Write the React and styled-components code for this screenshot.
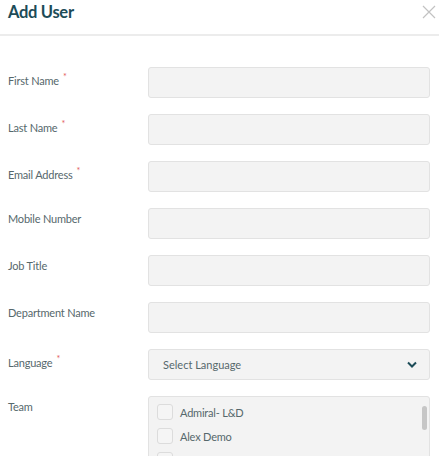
import React from 'react';
import styled, { createGlobalStyle } from 'styled-components';

const GlobalStyle = createGlobalStyle`
  html, body {
    margin: 0;
    padding: 0;
    background: #fff;
    overflow: hidden;
    font-family: Lato, "Open Sans", sans-serif;
  }
`;

const Modal = styled.div`
  width: 439px;
  background: #fff;
`;

const Header = styled.div`
  display: flex;
  align-items: center;
  justify-content: space-between;
  height: 34px;
  padding: 0 3px 0 8px;
  border-bottom: 2px solid #ececec;
`;

const Title = styled.h2`
  margin: 0;
  margin-top: -11px;
  font-size: 16.5px;
  font-weight: 700;
  color: #1d4c58;
  letter-spacing: -0.3px;
`;

const Close = styled.button`
  border: none;
  background: none;
  padding: 0;
  width: 14px;
  height: 14px;
  margin-top: -10px;
  cursor: pointer;
`;

const Form = styled.div`
  display: flex;
  flex-direction: column;
  gap: 16px;
  padding: 31px 9px 0 8px;
`;

const Row = styled.div`
  display: grid;
  grid-template-columns: 140px 1fr;
  align-items: start;
`;

const Label = styled.label`
  font-size: 11px;
  color: #56686c;
  padding-top: 4px;
  letter-spacing: -0.2px;
`;

const Req = styled.span`
  color: #e35b5b;
  font-size: 9px;
  vertical-align: 5px;
  margin-left: 4px;
`;

const Input = styled.input`
  box-sizing: border-box;
  width: 100%;
  height: 31px;
  background: #f3f3f3;
  border: 1px solid #e2e2e2;
  border-radius: 3px;
  outline: none;
`;

const Select = styled.div`
  box-sizing: border-box;
  height: 31px;
  background: #f3f3f3;
  border: 1px solid #e2e2e2;
  border-radius: 3px;
  display: flex;
  align-items: center;
  justify-content: space-between;
  padding: 0 12px 0 14px;
  font-size: 11px;
  color: #56686c;
`;

const TeamBox = styled.div`
  position: relative;
  box-sizing: border-box;
  height: 80px;
  background: #f3f3f3;
  border: 1px solid #e2e2e2;
  border-radius: 3px;
  padding: 3px 8px;
  overflow: hidden;
`;

const Thumb = styled.div`
  position: absolute;
  top: 9px;
  right: 2px;
  width: 5px;
  height: 24px;
  border-radius: 3px;
  background: #c6c6c6;
`;

const TeamItem = styled.div`
  display: flex;
  align-items: center;
  gap: 7px;
  height: 24px;
  font-size: 11px;
  color: #56686c;
  letter-spacing: -0.2px;
`;

const Check = styled.span`
  box-sizing: border-box;
  width: 16px;
  height: 16px;
  border: 1px solid #dcdcdc;
  border-radius: 3px;
  background: #f5f5f5;
  flex-shrink: 0;
`;

const fields = [
  { label: 'First Name', required: true },
  { label: 'Last Name', required: true },
  { label: 'Email Address', required: true },
  { label: 'Mobile Number' },
  { label: 'Job Title' },
  { label: 'Department Name' },
];

const teams = ['Admiral- L&D', 'Alex Demo', 'ALSO Finland Oy'];

export default function App() {
  return (
    <Modal>
      <GlobalStyle />
      <Header>
        <Title>Add User</Title>
        <Close aria-label="close">
          <svg width="14" height="14" viewBox="0 0 14 14">
            <path d="M1 1L13 13M13 1L1 13" stroke="#c2c2c2" strokeWidth="1.2" />
          </svg>
        </Close>
      </Header>
      <Form>
        {fields.map((f) => (
          <Row key={f.label}>
            <Label>
              {f.label}
              {f.required && <Req>*</Req>}
            </Label>
            <Input />
          </Row>
        ))}
        <Row>
          <Label>
            Language<Req>*</Req>
          </Label>
          <Select>
            <span>Select Language</span>
            <svg width="10" height="7" viewBox="0 0 10 7">
              <path d="M1 1.5L5 5.5L9 1.5" stroke="#1d4c58" strokeWidth="2" fill="none" />
            </svg>
          </Select>
        </Row>
        <Row>
          <Label>Team</Label>
          <TeamBox>
            <Thumb />
            {teams.map((t) => (
              <TeamItem key={t}>
                <Check />
                {t}
              </TeamItem>
            ))}
          </TeamBox>
        </Row>
      </Form>
    </Modal>
  );
}
